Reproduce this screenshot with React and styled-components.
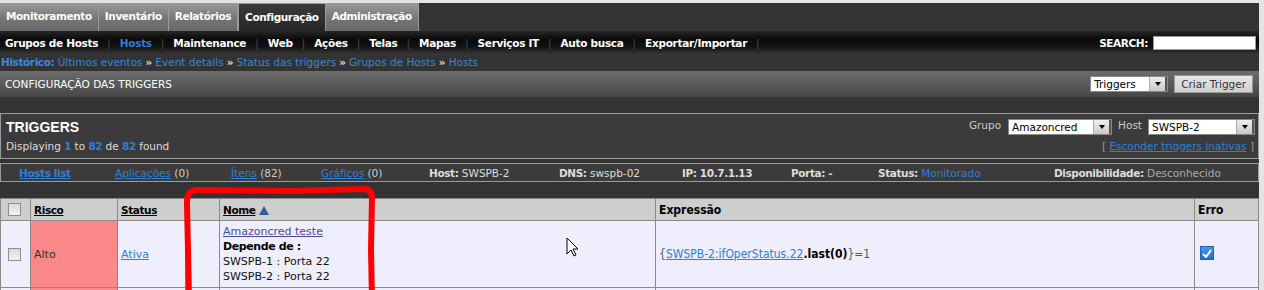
import React from "react";
import styled, { createGlobalStyle, css } from "styled-components";

const Global = createGlobalStyle`
  html, body { margin: 0; padding: 0; background: #e4e4e4; }
  body { font-family: "DejaVu Sans", Verdana, sans-serif; font-size: 10.5px; }
  #root { position: relative; }
`;

const boldText = css`
  font-weight: bold;
  font-size: 10.5px;
  letter-spacing: -0.4px;
`;

const Page = styled.div`
  margin-top: 3px;
  width: 1259px;
  background: #333;
  position: relative;
`;

const Tabs = styled.div`
  display: flex;
  height: 28px;
  background: #333;
`;

const Tab = styled.div`
  ${boldText};
  padding: 0 6px;
  line-height: 27px;
  color: #fff;
  border-right: 1px solid #9a9a9a;
  border-left: ${(p) => (p.$active ? "1px solid #999" : "none")};
  border-top: ${(p) => (p.$active ? "1px solid #999" : "none")};
  background: ${(p) =>
    p.$active
      ? "linear-gradient(#3a3a3a, #262626)"
      : "linear-gradient(#9a9a9a, #747474 60%, #686868)"};
`;

const SubNav = styled.div`
  display: flex;
  align-items: center;
  height: 24px;
  padding: 0 3px 0 5px;
  background: linear-gradient(#262626, #0a0a0a 35%, #121212 65%, #3a3a3a);
`;

const NavItem = styled.span`
  ${boldText};
  letter-spacing: -0.3px;
  color: ${(p) => (p.$active ? "#2b80d8" : "#fff")};
`;

const NavSep = styled.span`
  color: #4a4a4a;
  padding: 0 9px;
`;

const Spacer = styled.div`
  flex: 1;
`;

const SearchLabel = styled.span`
  ${boldText};
  color: #fff;
  margin-right: 5px;
`;

const SearchInput = styled.div`
  width: 101px;
  height: 12px;
  background: #fff;
  border: 1px solid #999;
`;

const Crumbs = styled.div`
  height: 16px;
  line-height: 15px;
  padding-left: 1px;
  background: #333;
  color: #3d86d2;
`;

const CrumbLabel = styled.span`
  ${boldText};
  color: #3d8ad8;
`;

const CrumbSep = styled.span`
  color: #ddd;
  font-weight: bold;
  padding: 0 3px;
`;

const HeaderBar = styled.div`
  display: flex;
  align-items: center;
  height: 26px;
  padding: 0 6px 0 5px;
  background: linear-gradient(#6c6c6c, #5a5a5a 50%, #464646);
  color: #fff;
`;

const HeaderTitle = styled.span`
  flex: 1;
`;

const Select = styled.div`
  display: flex;
  align-items: stretch;
  width: ${(p) => p.$w}px;
  height: 16px;
  background: #fff;
  border: 1px solid #888;
  box-sizing: border-box;
  color: #000;
`;

const SelectText = styled.span`
  flex: 1;
  padding-left: 3px;
  line-height: 15px;
  white-space: nowrap;
  overflow: hidden;
`;

const SelectArrow = styled.span`
  width: 15px;
  background: linear-gradient(#eee, #c8c8c8);
  border-left: 1px solid #aaa;
  border-right: 2px solid #555;
  display: flex;
  align-items: center;
  justify-content: center;
  &::after {
    content: "";
    border-left: 3px solid transparent;
    border-right: 3px solid transparent;
    border-top: 4px solid #000;
  }
`;

const Button = styled.div`
  margin-left: 6px;
  height: 18px;
  padding: 0 6px;
  line-height: 17px;
  background: linear-gradient(#e6e6e6, #d0d0d0);
  border: 1px solid #9a9a9a;
  box-sizing: border-box;
  color: #333;
`;

const Gap = styled.div`
  height: ${(p) => p.$h}px;
  background: #333;
`;

const Box = styled.div`
  display: flex;
  justify-content: space-between;
  border: 1px solid #9c9c9c;
  background: #3b3b3b;
  height: 44px;
`;

const BoxLeft = styled.div`
  padding: 5px 0 0 5px;
  display: flex;
  flex-direction: column;
`;

const BoxTitle = styled.div`
  font-family: "Liberation Sans", Arial, sans-serif;
  font-weight: bold;
  font-size: 14px;
  color: #fff;
  line-height: 17px;
`;

const BoxInfo = styled.div`
  color: #ddd;
  margin-top: 4px;
`;

const Num = styled.b`
  ${boldText};
  color: #2b80d8;
`;

const BoxRight = styled.div`
  display: flex;
  flex-direction: column;
  align-items: flex-end;
  padding: 5px 3px 0 0;
`;

const FilterRow = styled.div`
  display: flex;
  align-items: center;
  color: #ccc;
`;

const FilterLabel = styled.span`
  margin: 0 ${(p) => p.$mr || 6}px 2px ${(p) => p.$ml || 0}px;
  align-self: flex-start;
`;

const HideLink = styled.div`
  margin-top: 5px;
  color: #999;
  padding-right: 1px;
`;

const BlueLink = styled.a`
  color: ${(p) => p.$color || "#2b80d8"};
  text-decoration: underline;
  ${(p) => p.$bold && boldText};
`;

const HostsBar = styled.div`
  display: grid;
  grid-template-columns: 96px 116px 90px 108px 130px 123px 109px 87px 176px 1fr;
  align-items: center;
  height: 17px;
  padding-left: 18px;
  border: 1px solid #9c9c9c;
  background: #3b3b3b;
  color: #ccc;
`;

const HostItem = styled.span`
  white-space: nowrap;
`;

const HostKey = styled.b`
  ${boldText};
  color: #ddd;
`;

const HostVal = styled.span`
  color: ${(p) => p.$color || "#ddd"};
`;

const Table = styled.table`
  border-collapse: collapse;
  width: 1259px;
  table-layout: fixed;
  background: #eeeefc;
  font-size: 11px;
`;

const narrowFont = css`
  font-family: "DejaVu Sans Condensed", "Liberation Sans", sans-serif;
  font-size: 12px;
`;

const Th = styled.th`
  ${boldText};
  background: #cecece;
  height: 21px;
  padding: 0 3px;
  border: 1px solid #8a8a8a;
  text-align: left;
  color: #000;
  ${(p) => p.$narrow && narrowFont};
  ${(p) => p.$narrow && "letter-spacing: 0;"}
`;

const HeadLink = styled.span`
  text-decoration: underline;
  color: #000;
`;

const SortArrow = styled.span`
  display: inline-block;
  margin-left: 4px;
  border-left: 5px solid transparent;
  border-right: 5px solid transparent;
  border-bottom: 9px solid #2c5fa0;
  vertical-align: -1px;
`;

const Td = styled.td`
  border: 1px solid #8a8a8a;
  padding: 3px 3px;
  vertical-align: middle;
  background: ${(p) => p.$bg || "transparent"};
  color: #333;
  line-height: 15px;
  height: ${(p) => p.$h || "auto"};
  ${(p) => p.$narrow && narrowFont};
`;

const Check = styled.span`
  display: inline-block;
  width: 13px;
  height: 13px;
  box-sizing: border-box;
  border: 1px solid #8e8e8e;
  background: linear-gradient(#d8d8d8, #f4f4f4);
  vertical-align: middle;
  margin-left: 4px;
`;

const BlueCheck = styled.span`
  display: inline-flex;
  align-items: center;
  justify-content: center;
  width: 14px;
  height: 14px;
  background: linear-gradient(#4a94f0, #1d6fd8);
  border: 1px solid #2060b8;
  box-sizing: border-box;
  margin-left: 2px;
`;

const NameLink = styled.a`
  color: #4b4ba0;
  text-decoration: underline;
`;

const Bold = styled.div`
  ${boldText};
  font-size: 11px;
  color: #000;
`;

const Line = styled.div`
  color: #111;
`;

const Gray = styled.span`
  color: #555;
`;

const ExprBold = styled.b`
  color: #000;
`;

const Overlay = styled.svg`
  position: absolute;
  left: 0;
  top: 0;
  pointer-events: none;
`;

export default function App() {
  const tabs = ["Monitoramento", "Inventário", "Relatórios", "Configuração", "Administração"];
  const nav = [
    "Grupos de Hosts", "Hosts", "Maintenance", "Web", "Ações", "Telas",
    "Mapas", "Serviços IT", "Auto busca", "Exportar/Importar",
  ];
  const crumbs = ["Últimos eventos", "Event details", "Status das triggers", "Grupos de Hosts", "Hosts"];
  return (
    <>
      <Global />
      <Page>
        <Tabs>
          {tabs.map((t) => (
            <Tab key={t} $active={t === "Configuração"}>{t}</Tab>
          ))}
        </Tabs>
        <SubNav>
          {nav.map((n) => (
            <React.Fragment key={n}>
              <NavItem $active={n === "Hosts"}>{n}</NavItem>
              <NavSep>|</NavSep>
            </React.Fragment>
          ))}
          <Spacer />
          <SearchLabel>SEARCH:</SearchLabel>
          <SearchInput />
        </SubNav>
        <Crumbs>
          <CrumbLabel>Histórico:</CrumbLabel>{" "}
          {crumbs.map((c, i) => (
            <React.Fragment key={c}>
              <span>{c}</span>
              {i < crumbs.length - 1 && <CrumbSep>»</CrumbSep>}
            </React.Fragment>
          ))}
        </Crumbs>
        <HeaderBar>
          <HeaderTitle>CONFIGURAÇÃO DAS TRIGGERS</HeaderTitle>
          <Select $w={78}>
            <SelectText>Triggers</SelectText>
            <SelectArrow />
          </Select>
          <Button>Criar Trigger</Button>
        </HeaderBar>
        <Gap $h={16} />
        <Box>
          <BoxLeft>
            <BoxTitle>TRIGGERS</BoxTitle>
            <BoxInfo>
              Displaying <Num>1</Num> to <Num>82</Num> de <Num>82</Num> found
            </BoxInfo>
          </BoxLeft>
          <BoxRight>
            <FilterRow>
              <FilterLabel $mr={7}>Grupo</FilterLabel>
              <Select $w={104}>
                <SelectText>Amazoncred</SelectText>
                <SelectArrow />
              </Select>
              <FilterLabel $ml={6}>Host</FilterLabel>
              <Select $w={107}>
                <SelectText>SWSPB-2</SelectText>
                <SelectArrow />
              </Select>
            </FilterRow>
            <HideLink>
              [ <BlueLink>Esconder triggers inativas</BlueLink> ]
            </HideLink>
          </BoxRight>
        </Box>
        <Gap $h={4} />
        <HostsBar>
          <HostItem><BlueLink $bold>Hosts list</BlueLink></HostItem>
          <HostItem><BlueLink>Aplicações</BlueLink> (0)</HostItem>
          <HostItem><BlueLink>Ítens</BlueLink> (82)</HostItem>
          <HostItem><BlueLink>Gráficos</BlueLink> (0)</HostItem>
          <HostItem><HostKey>Host:</HostKey> <HostVal>SWSPB-2</HostVal></HostItem>
          <HostItem><HostKey>DNS:</HostKey> <HostVal>swspb-02</HostVal></HostItem>
          <HostItem><HostKey>IP: 10.7.1.13</HostKey></HostItem>
          <HostItem><HostKey>Porta: -</HostKey></HostItem>
          <HostItem><HostKey>Status:</HostKey> <HostVal $color="#2b80d8">Monitorado</HostVal></HostItem>
          <HostItem><HostKey>Disponibilidade:</HostKey> <HostVal $color="#aaa">Desconhecido</HostVal></HostItem>
        </HostsBar>
        <Gap $h={16} />
        <Table>
          <colgroup>
            <col style={{ width: 30 }} />
            <col style={{ width: 87 }} />
            <col style={{ width: 68 }} />
            <col style={{ width: 34 }} />
            <col style={{ width: 436 }} />
            <col style={{ width: 539 }} />
            <col />
          </colgroup>
          <thead>
            <tr>
              <Th><Check /></Th>
              <Th><HeadLink>Risco</HeadLink></Th>
              <Th><HeadLink>Status</HeadLink></Th>
              <Th />
              <Th><HeadLink>Nome</HeadLink><SortArrow /></Th>
              <Th $narrow>Expressão</Th>
              <Th $narrow>Erro</Th>
            </tr>
          </thead>
          <tbody>
            <tr>
              <Td><Check /></Td>
              <Td $bg="#fa8888">Alto</Td>
              <Td><BlueLink>Ativa</BlueLink></Td>
              <Td />
              <Td $h="58px">
                <NameLink>Amazoncred teste</NameLink>
                <Bold>Depende de :</Bold>
                <Line>SWSPB-1 : Porta 22</Line>
                <Line>SWSPB-2 : Porta 22</Line>
              </Td>
              <Td $narrow>
                <Gray>{"{"}</Gray>
                <BlueLink>SWSPB-2:ifOperStatus.22</BlueLink>
                <ExprBold>.last(0)</ExprBold>
                <Gray>{"}=1"}</Gray>
              </Td>
              <Td>
                <BlueCheck>
                  <svg width="10" height="9" viewBox="0 0 10 9">
                    <path d="M1 5 L4 8 L9 1" stroke="#fff" strokeWidth="2" fill="none" />
                  </svg>
                </BlueCheck>
              </Td>
            </tr>
            <tr>
              <Td $h="20px" />
              <Td $bg="#fa8888" />
              <Td />
              <Td />
              <Td />
              <Td />
              <Td />
            </tr>
          </tbody>
        </Table>
        <Overlay width="1259" height="300" viewBox="0 0 1259 300">
          <path
            d="M189 300 L188 250 L187 205 Q186 191 196 190 L290 191 L364 189 Q372 189 372 198 L371 250 L372 300"
            stroke="#f00"
            strokeWidth="6"
            fill="none"
            strokeLinecap="round"
            strokeLinejoin="round"
            transform="translate(0,-3)"
          />
          <path
            d="M567 238 L567 254 L571 250 L574 256 L576 255 L573 249 L578 249 Z"
            fill="#fff"
            stroke="#000"
            strokeWidth="1"
            transform="translate(0,-3)"
          />
        </Overlay>
      </Page>
    </>
  );
}
